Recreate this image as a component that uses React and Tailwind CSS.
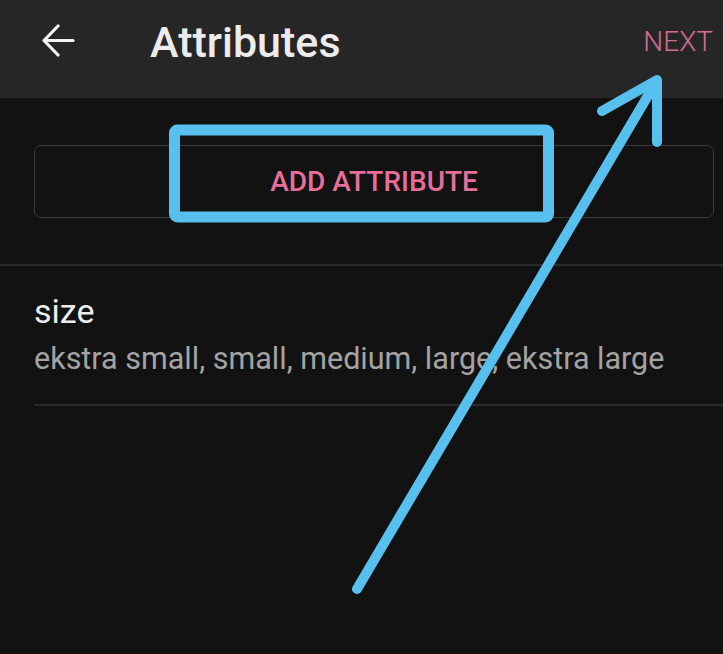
import React from 'react';

const font = { fontFamily: 'Roboto, "Noto Sans", sans-serif' };

function BackArrow() {
  return (
    <svg width="33" height="33" viewBox="0 0 33 33" fill="none" stroke="#f2f2f2" strokeWidth="3.2" strokeLinecap="round" strokeLinejoin="round">
      <path d="M31 16.5H3" />
      <path d="M16 2L2 16.5L16 31" />
    </svg>
  );
}

// annotation drawn over the screenshot
function Annotation() {
  return (
    <svg className="absolute inset-0 pointer-events-none" width="723" height="654" viewBox="0 0 723 654" fill="none">
      <rect x="174.5" y="130" width="374" height="87" rx="3" stroke="#57c0ee" strokeWidth="11" />
      <g stroke="#57c0ee" strokeWidth="10" strokeLinecap="round" strokeLinejoin="round">
        <path d="M357 589L656 82" />
        <path d="M602 111L657 80L657 142" />
      </g>
    </svg>
  );
}

export default function App() {
  return (
    <div className="relative w-[723px] h-[654px] bg-[#121212] overflow-hidden" style={font}>
      {/* Top bar */}
      <div className="h-[98px] bg-[#262626] flex items-start">
        <div className="ml-[42px] mt-[24px]">
          <BackArrow />
        </div>
        <h1 className="ml-[75px] mt-[17px] text-[43px] leading-[50px] font-medium text-[#ececec]">Attributes</h1>
        <button className="ml-auto mr-[10px] mt-[26px] text-[28px] leading-[32px] font-light text-[#d46c93]">NEXT</button>
      </div>

      {/* Add attribute */}
      <div className="pt-[47px] pl-[34px] pr-[9px]">
        <button className="w-full h-[73px] rounded-[7px] border border-[#3a3a3a] flex items-center justify-center text-[28px] font-medium text-[#e56f99]">
          ADD ATTRIBUTE
        </button>
      </div>

      <div className="mt-[46px] h-[2px] bg-[#2a2a2a]" />

      {/* Attribute list */}
      <div className="pl-[34px]">
        <div className="pt-[25px] text-[34px] leading-[40px] text-[#ececec]">size</div>
        <div className="mt-[10px] text-[30.5px] leading-[36px] text-[#a3a3a3]">
          ekstra small, small, medium, large, ekstra large
        </div>
        <div className="mt-[27px] h-[2px] bg-[#2a2a2a]" />
      </div>

      <Annotation />
    </div>
  );
}
